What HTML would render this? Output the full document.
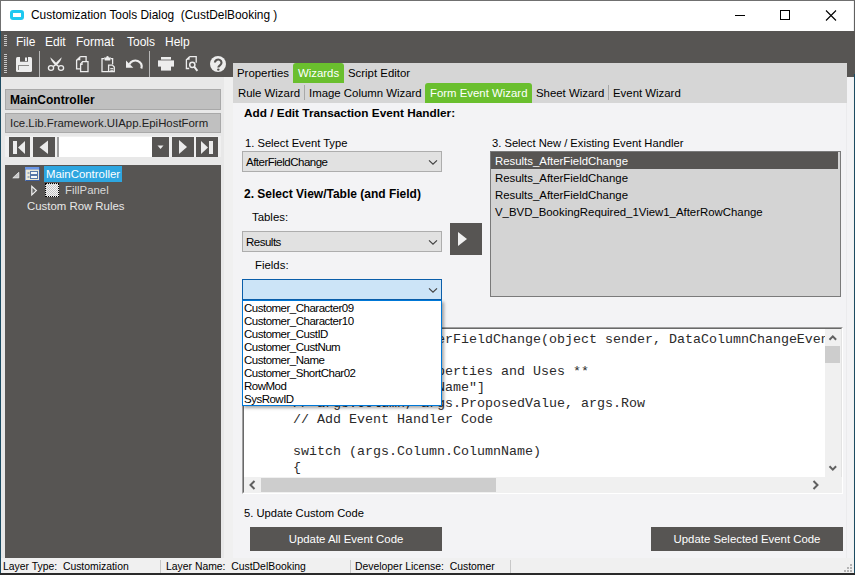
<!DOCTYPE html>
<html><head><meta charset="utf-8">
<style>
*{margin:0;padding:0;box-sizing:border-box}
html,body{width:855px;height:575px;overflow:hidden;background:#1e1e1e}
body{position:relative;font-family:"Liberation Sans",sans-serif;font-size:11.4px;color:#000}
.a{position:absolute}
.t{position:absolute;white-space:pre;line-height:1}
.dk{background:#575553}
</style></head><body>
<!-- window -->
<div class="a" style="left:0;top:0;width:855px;height:573px;background:#f0f0f0;border:1px solid #707070;border-bottom:none;border-right-color:#606060"></div>
<div class="a" style="left:0;top:573px;width:855px;height:2px;background:#2a2a2a"></div>
<div class="a" style="left:0;top:31px;width:1px;height:542px;background:#1d4c62"></div>
<!-- title bar -->
<div class="a" style="left:1px;top:1px;width:852px;height:30px;background:#fff"></div>
<div class="a" style="left:10px;top:10px;width:14px;height:10px;background:#1ec8f0;border-radius:3px"></div>
<div class="a" style="left:13px;top:13px;width:8px;height:4px;background:#fff"></div>
<div class="t" style="left:31px;top:10px;font-size:11.9px">Customization Tools Dialog  (CustDelBooking )</div>
<div class="a" style="left:735px;top:15px;width:10px;height:1px;background:#000"></div>
<div class="a" style="left:780px;top:10px;width:10px;height:10px;border:1px solid #000"></div>
<svg class="a" style="left:825px;top:10px" width="12" height="11" viewBox="0 0 12 11"><path d="M1 0.5L11 10.5M11 0.5L1 10.5" stroke="#000" stroke-width="1.1"/></svg>

<!-- menu + toolbar dark -->
<div class="a dk" style="left:1px;top:31px;width:854px;height:46px"></div>
<div class="a" style="left:854px;top:74px;width:1px;height:499px;background:#1d4c62"></div>
<div class="t" style="left:16px;top:36px;font-size:12px;color:#fff">File</div>
<div class="t" style="left:45px;top:36px;font-size:12px;color:#fff">Edit</div>
<div class="t" style="left:76px;top:36px;font-size:12px;color:#fff">Format</div>
<div class="t" style="left:127px;top:36px;font-size:12px;color:#fff">Tools</div>
<div class="t" style="left:165px;top:36px;font-size:12px;color:#fff">Help</div>

<!-- left panel -->
<div class="a" style="left:1px;top:77px;width:223px;height:481px;background:#e8e8e8"></div>
<div class="a" style="left:5px;top:89px;width:216px;height:21px;background:#c0c0c0;border:1px solid #a9a9a9"></div>
<div class="t" style="left:10px;top:94px;font-size:12px;font-weight:bold">MainController</div>
<div class="a" style="left:5px;top:113px;width:216px;height:20px;background:#c0c0c0;border:1px solid #a9a9a9"></div>
<div class="t" style="left:10px;top:118px;font-size:11.4px;color:#222">Ice.Lib.Framework.UIApp.EpiHostForm</div>
<div class="a" style="left:5px;top:136px;width:216px;height:21px;background:#f0f0f0"></div>
<div class="a dk" style="left:9px;top:137px;width:21px;height:20px"></div>
<div class="a dk" style="left:33px;top:137px;width:22px;height:20px"></div>
<div class="a" style="left:57px;top:137px;width:95px;height:20px;background:#fff;border-left:2px solid #a0a0a0"></div>
<div class="a dk" style="left:152px;top:137px;width:17px;height:20px"></div>
<div class="a dk" style="left:172px;top:137px;width:22px;height:20px"></div>
<div class="a dk" style="left:196px;top:137px;width:22px;height:20px"></div>
<div class="a dk" style="left:5px;top:165px;width:216px;height:393px"></div>
<div class="a" style="left:44px;top:166px;width:78px;height:16px;background:#2ea6e0"></div>
<div class="t" style="left:46px;top:169px;font-size:11.4px;color:#fff">MainController</div>
<div class="a" style="left:45px;top:183px;width:14px;height:14px;border:1px dotted #000;background:repeating-conic-gradient(#f4f4f4 0 25%,#c4c4c4 0 50%) 0 0/2px 2px"></div>
<div class="t" style="left:65px;top:185px;font-size:11.4px;color:#d8d8d8">FillPanel</div>
<div class="t" style="left:27px;top:201px;font-size:11.4px;color:#e8e8e8">Custom Row Rules</div>

<!-- right panel -->
<div class="a" style="left:233px;top:77px;width:620px;height:481px;background:#f3f3f5"></div>
<div class="a" style="left:233px;top:63px;width:614px;height:40px;background:#d6d6d6"></div>
<div class="a" style="left:846px;top:103px;width:1px;height:455px;background:#ebebed"></div>
<div class="a" style="left:293px;top:63px;width:51px;height:20px;background:#6abf2e;border-radius:3px 3px 0 0"></div>
<div class="t" style="left:237px;top:68px">Properties</div>
<div class="t" style="left:298px;top:68px;color:#fff">Wizards</div>
<div class="t" style="left:348px;top:68px">Script Editor</div>
<div class="a" style="left:425px;top:83px;width:107px;height:20px;background:#6abf2e;border-radius:3px 3px 0 0"></div>
<div class="t" style="left:238px;top:88px">Rule Wizard</div>
<div class="a" style="left:304px;top:85px;width:1px;height:15px;background:#a8a8a8"></div>
<div class="t" style="left:309px;top:88px">Image Column Wizard</div>
<div class="t" style="left:430px;top:88px;color:#fff">Form Event Wizard</div>
<div class="t" style="left:536px;top:88px">Sheet Wizard</div>
<div class="a" style="left:608px;top:85px;width:1px;height:15px;background:#a8a8a8"></div>
<div class="t" style="left:613px;top:88px">Event Wizard</div>

<div class="t" style="left:244px;top:108px;font-size:11.8px;font-weight:bold">Add / Edit Transaction Event Handler:</div>

<!-- status bar -->
<div class="a" style="left:1px;top:558px;width:852px;height:15px;background:#f0f0f0"></div>
<div class="t" style="left:3px;top:562px;font-size:10.4px">Layer Type:  Customization</div>

<!-- toolbar grips & icons -->
<div class="a" style="left:4px;top:35px;width:3px;height:12px;background:repeating-linear-gradient(#c8c8c8 0 1px,transparent 1px 2px)"></div>
<div class="a" style="left:4px;top:54px;width:3px;height:20px;background:repeating-linear-gradient(#c8c8c8 0 1px,transparent 1px 2px)"></div>
<div class="a" style="left:39px;top:51px;width:1px;height:26px;background:#b8b8b8"></div>
<div class="a" style="left:149px;top:51px;width:1px;height:26px;background:#b8b8b8"></div>
<svg class="a" style="left:0;top:50px" width="232" height="27" viewBox="0 50 232 27">
 <g fill="#ededed" stroke="none">
  <rect x="16" y="57" width="16" height="15" rx="1.5"/>
  <rect x="20" y="56.5" width="8" height="5.2" fill="#575553"/>
  <rect x="25" y="57.5" width="2" height="3.6"/>
  <rect x="18" y="65" width="11" height="1" fill="#8c8b89"/>
  <rect x="18" y="65" width="1" height="5" fill="#8c8b89"/>
 </g>
 <g fill="#ededed" stroke="none">
  <path d="M50.3 57.2Q51 61.5 55.3 65.2L57 63.8Q54 60.5 50.3 57.2z"/>
  <path d="M61.7 57.2Q61 61.5 56.7 65.2L55 63.8Q58 60.5 61.7 57.2z"/>
 </g>
 <g fill="none" stroke="#ededed" stroke-width="1.3">
  <ellipse cx="51" cy="68" rx="2.6" ry="2.3"/><ellipse cx="61" cy="68" rx="2.6" ry="2.3"/>
  <path d="M53.3 66.5L56 64.5L58.7 66.5" stroke-width="1.5"/>
  <path d="M80.3 56.6h5.8v4.6M80.3 56.6l-3.7 3.7v8.6h3.4"/>
  <path d="M82.6 61.6h5.4v10h-7.4v-7.7z"/>
  <path d="M104 58.6h-2v13h6M111 58.6h1.6v5.6"/>
  <path d="M108.6 65.1h3.8l1.9 1.9v4.6h-5.7z"/>
  <path d="M110.3 68.6h3M110.3 70.3h3" stroke-width="1"/>
  <path d="M129.5 64.2a6.3 5.8 0 0 1 11.8 4.3" stroke-width="2.2"/>
  <path d="M189.6 56.6h6.6v6.2M189.6 56.6l-3.2 3.2v8.7h2.8"/>
  <circle cx="192.3" cy="64.8" r="2.6" stroke-width="1.5"/>
  <path d="M194.3 66.9l3.1 4" stroke-width="2"/>
 </g>
 <g fill="#ededed">
  <path d="M80.3 56.6v3.7h-3.7z"/>
  <path d="M82.6 61.6v3.3h-2z"/>
  <path d="M104 57.6h7l-.8 2.8h-5.4z"/><circle cx="107.5" cy="57.3" r="1.2"/>
  <path d="M126 60.5v7.3h7.3z"/>
  <path d="M189.6 56.6v3.2h-3.2z"/>
  <rect x="161" y="57" width="10" height="2.6"/>
  <rect x="158" y="60.4" width="16" height="6.2"/>
  <rect x="161" y="66" width="10" height="4.6"/>
  <circle cx="218" cy="64" r="8"/>
 </g>
 <path d="M214.9 62.6a3.3 3.1 0 1 1 5.3 2.5c-1.3.9-1.9 1.3-1.9 2.5" fill="none" stroke="#575553" stroke-width="2.1"/>
 <circle cx="218.3" cy="69.6" r="1.2" fill="#575553"/>
</svg>

<!-- nav icons -->
<svg class="a" style="left:0;top:130px" width="224" height="30" viewBox="0 130 224 30">
 <g fill="#ececec">
  <rect x="13" y="141" width="4" height="13"/><path d="M25 141v13l-7-6.5z"/>
  <path d="M48 140.5v13.5l-8.5-6.75z"/>
  <path d="M157.5 145.5h6l-3 3.5z"/>
  <path d="M179 140v14l8-7z"/>
  <path d="M201 141v13l7-6.5z"/><rect x="209" y="141" width="4" height="13"/>
 </g>
</svg>

<!-- tree icons -->
<svg class="a" style="left:0;top:160px" width="70" height="40" viewBox="0 160 70 40">
 <path d="M18.8 172.3v5.6h-6z" fill="#c8c8c8" stroke="#e8e8e8" stroke-width="0.8"/>
 <path d="M31.8 186.3v8.6l4.6-4.3z" fill="#6a6a6a" stroke="#f0f0f0" stroke-width="1.2"/>
 <rect x="25" y="167" width="15" height="14" fill="#3c5c9c"/>
 <rect x="25" y="167" width="14" height="2.5" fill="#6a96e8"/>
 <rect x="25" y="169.5" width="1" height="11" fill="#8aa6d8"/>
 <rect x="26" y="169.5" width="13" height="10.5" fill="#ece8d6"/>
 <rect x="27.5" y="172.5" width="2" height="1" fill="#5878a8"/><rect x="30.5" y="171.5" width="7" height="3" fill="#f8f8f8" stroke="#5878a8" stroke-width="1"/>
 <rect x="27.5" y="176.5" width="2" height="1" fill="#5878a8"/><rect x="30.5" y="175.5" width="7" height="3" fill="#f8f8f8" stroke="#5878a8" stroke-width="1"/>
</svg>

<!-- section 1 -->
<div class="t" style="left:245px;top:138px;font-size:11.2px">1. Select Event Type</div>
<div class="a" style="left:242px;top:151px;width:200px;height:21px;background:#e1e1e1;border:1px solid #adadad"></div>
<div class="t" style="left:246px;top:157px;font-size:11.5px;letter-spacing:-0.5px">AfterFieldChange</div>
<svg class="a" style="left:427px;top:158px" width="12" height="8"><path d="M2 2.3l4 3.8l4-3.8" fill="none" stroke="#404040" stroke-width="1.15"/></svg>

<div class="t" style="left:244px;top:188px;font-size:12px;font-weight:bold">2. Select View/Table (and Field)</div>
<div class="t" style="left:252px;top:212px">Tables:</div>
<div class="a" style="left:242px;top:231px;width:200px;height:21px;background:#e1e1e1;border:1px solid #adadad"></div>
<div class="t" style="left:246px;top:237px;font-size:11.5px;letter-spacing:-0.5px">Results</div>
<svg class="a" style="left:427px;top:238px" width="12" height="8"><path d="M2 2.3l4 3.8l4-3.8" fill="none" stroke="#404040" stroke-width="1.15"/></svg>
<div class="a dk" style="left:450px;top:223px;width:32px;height:32px"></div>
<svg class="a" style="left:450px;top:223px" width="32" height="32"><path d="M8 9v14l9-7z" fill="#f0f0f0"/></svg>
<div class="t" style="left:255px;top:260px">Fields:</div>

<!-- section 3 list -->
<div class="t" style="left:492px;top:138px;font-size:11.2px">3. Select New / Existing Event Handler</div>
<div class="a" style="left:490px;top:151px;width:351px;height:146px;background:#d4d4d4;border:1px solid #7a7a7a"></div>
<div class="a dk" style="left:491px;top:152px;width:347px;height:17px"></div>
<div class="t" style="left:495px;top:156px;color:#fff">Results_AfterFieldChange</div>
<div class="t" style="left:495px;top:173px">Results_AfterFieldChange</div>
<div class="t" style="left:495px;top:190px">Results_AfterFieldChange</div>
<div class="t" style="left:495px;top:207px">V_BVD_BookingRequired_1View1_AfterRowChange</div>

<!-- code editor -->
<div class="a" style="left:242px;top:327px;width:601px;height:167px;background:#fff;border-top:1px solid #a0a0a0;border-left:1px solid #a0a0a0;border-right:1px solid #fff;border-bottom:1px solid #fff"></div>
<div class="a" style="left:243px;top:328px;width:599px;height:165px;border-top:1px solid #696969;border-left:1px solid #696969;border-right:1px solid #e3e3e3;border-bottom:1px solid #e3e3e3"></div>
<div class="a" style="left:244px;top:329px;width:581px;height:148px;overflow:hidden;font-family:'Liberation Mono',monospace;font-size:13.333px;line-height:16px;white-space:pre;color:#2a2a2a">
<div style="position:absolute;left:1px;top:3px">private void Results_AfterFieldChange(object sender, DataColumnChangeEventArgs args)
{
      // ** Argument Properties and Uses **
      // args.Row["FieldName"]
      // args.Column, args.ProposedValue, args.Row
      // Add Event Handler Code

      switch (args.Column.ColumnName)
      {</div></div>
<div class="a" style="left:825px;top:329px;width:16px;height:148px;background:#f0f0f0"></div>
<div class="a" style="left:825px;top:346px;width:15px;height:17px;background:#cdcdcd"></div>
<svg class="a" style="left:825px;top:329px" width="16" height="148"><path d="M4.5 10.8l3.3-3.4l3.3 3.4" fill="none" stroke="#606060" stroke-width="2"/><path d="M4.5 137.2l3.3 3.4l3.3-3.4" fill="none" stroke="#606060" stroke-width="2"/></svg>
<div class="a" style="left:244px;top:477px;width:598px;height:16px;background:#f0f0f0"></div>
<div class="a" style="left:261px;top:478px;width:235px;height:14px;background:#cdcdcd"></div>
<svg class="a" style="left:244px;top:477px" width="598" height="16"><path d="M10.5 4l-4 4l4 4" fill="none" stroke="#606060" stroke-width="2"/><path d="M569.5 4l4 4l-4 4" fill="none" stroke="#606060" stroke-width="2"/></svg>

<!-- fields combo + dropdown (on top) -->
<div class="a" style="left:242px;top:279px;width:200px;height:21px;background:#cce4f7;border:1px solid #0a5eaa"></div>
<svg class="a" style="left:427px;top:285.5px" width="12" height="8"><path d="M2 2.3l4 3.8l4-3.8" fill="none" stroke="#404040" stroke-width="1.15"/></svg>
<div class="a" style="left:242px;top:300px;width:200px;height:106px;background:#fff;border:1px solid #0078d7;box-shadow:2px 2px 3px rgba(0,0,0,0.35)"></div>
<div class="a" style="left:244px;top:302px;font-size:11.5px;letter-spacing:-0.5px;line-height:13px;white-space:pre">Customer_Character09
Customer_Character10
Customer_CustID
Customer_CustNum
Customer_Name
Customer_ShortChar02
RowMod
SysRowID</div>

<!-- section 5 -->
<div class="t" style="left:244px;top:508px;font-size:11.2px">5. Update Custom Code</div>
<div class="a dk" style="left:250px;top:527px;width:192px;height:24px"></div>
<div class="t" style="left:250px;top:534px;width:192px;text-align:center;color:#fff">Update All Event Code</div>
<div class="a dk" style="left:651px;top:527px;width:192px;height:24px"></div>
<div class="t" style="left:651px;top:534px;width:192px;text-align:center;color:#fff">Update Selected Event Code</div>

<!-- status extra -->
<div class="a" style="left:160px;top:560px;width:1px;height:13px;background:#c8c8c8"></div>
<div class="t" style="left:166px;top:562px;font-size:10.4px">Layer Name:  CustDelBooking</div>
<div class="a" style="left:350px;top:560px;width:1px;height:13px;background:#c8c8c8"></div>
<div class="t" style="left:355px;top:562px;font-size:10.4px">Developer License:  Customer</div>
<div class="a" style="left:510px;top:560px;width:1px;height:13px;background:#c8c8c8"></div>
<div class="a" style="left:850px;top:564px;width:2px;height:2px;background:#b4b4b4;box-shadow:-3px 3px #b4b4b4,0 3px #b4b4b4,-6px 6px #b4b4b4,-3px 6px #b4b4b4,0 6px #b4b4b4"></div>
</body></html>
